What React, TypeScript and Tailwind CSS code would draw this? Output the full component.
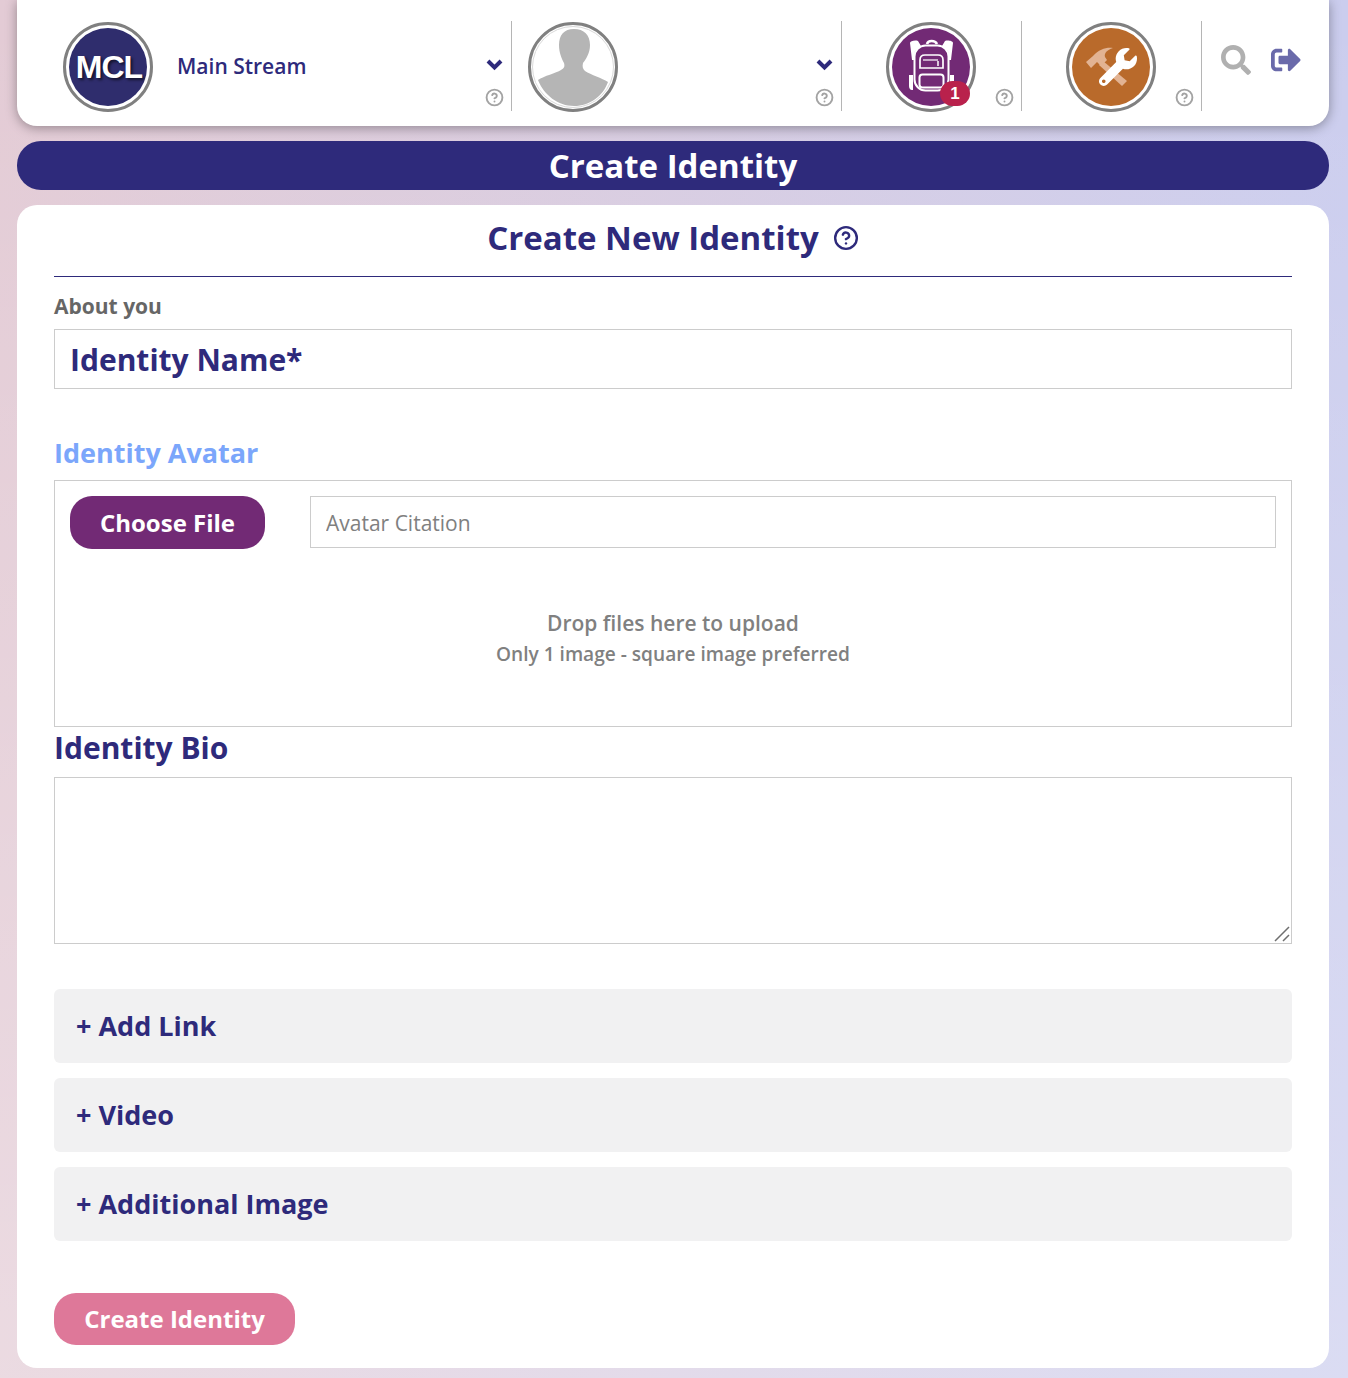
import { ReactNode } from "react";
import { CircleHelp } from "lucide-react";
import { FaSearch, FaSignOutAlt, FaWrench } from "react-icons/fa";

const HelpDot = ({ className = "" }: { className?: string }) => (
  <CircleHelp className={`h-[19px] w-[19px] text-[#a3a3a3] ${className}`} strokeWidth={2.4} />
);

function Chevron() {
  return (
    <svg viewBox="0 0 17 13" className="absolute right-[8px] top-[37px] h-[13px] w-[17px] text-[#2e2a7b]" fill="none" stroke="currentColor" strokeWidth="4">
      <path d="M2 3l6.5 6.5L15 3" />
    </svg>
  );
}

function Avatar({ fill, children }: { fill: string; children: ReactNode }) {
  return (
    <div className="relative mt-[2px] flex h-[90px] w-[90px] shrink-0 items-center justify-center rounded-full border-[3px] border-[#808080] bg-white">
      <div className={`relative flex h-[78px] w-[78px] items-center justify-center rounded-full ${fill}`}>
        {children}
      </div>
    </div>
  );
}

function NavCell({ width, pad, chevron, children }: { width: string; pad: string; chevron?: boolean; children: ReactNode }) {
  return (
    <div className={`relative flex h-[90px] items-center border-r border-[#b5b5b5] ${width} ${pad}`}>
      {children}
      {chevron && <Chevron />}
      <HelpDot className="absolute right-[7px] top-[67px]" />
    </div>
  );
}

function Backpack() {
  return (
    <svg viewBox="0 0 78 78" className="h-[78px] w-[78px]" fill="none" stroke="#fff" strokeWidth="2">
      <path d="M18 15c0-2 5-3 8-2l3 5-6 5-1 9-2 0z M61 15c0-2-5-3-8-2l-3 5 6 5 1 9 2 0z" fill="#fff" stroke="none" />
      <path d="M35 16c1-4 8-4 10 0" strokeWidth="2.6" />
      <rect x="22.5" y="17.5" width="34" height="45" rx="11" />
      <path d="M28 40v-8c0-3 2-5 5-5h13c3 0 5 2 5 5v8z" strokeWidth="1.7" />
      <path d="M31 32h15" strokeWidth="1.2" />
      <path d="M46 33v5" strokeWidth="1.5" />
      <rect x="27.5" y="46.5" width="24" height="13" rx="3" />
      <path d="M17 47h4v15h-1c-2 0-3-2-3-4z M62 47h-4v15h1c2 0 3-2 3-4z" fill="#fff" stroke="none" />
    </svg>
  );
}

function HammerWrench() {
  return (
    <>
      <svg viewBox="0 0 78 78" className="absolute inset-0 h-[78px] w-[78px]" fill="#e2b393">
        <path d="M14 34l7-6c6-7 14-9 20-8-6 2-9 5-8 9l2 3-6 6-4-4-6 6z" />
        <path d="M31 33l24 20-5 5-23-21z" />
      </svg>
      <FaWrench className="absolute left-[27px] top-[20px] h-[38px] w-[38px] text-white" />
    </>
  );
}

function Person() {
  return (
    <svg viewBox="0 0 84 84" className="h-[84px] w-[84px]">
      <circle cx="42" cy="42" r="40.5" fill="#fff" stroke="#cfcfcf" strokeWidth="0.8" />
      <path
        d="M43 4C33 4 28 10 28 20c0 8 3 14 5 18 1 4 0 5-3 7-5 3-17 6-23 10 6 15 20 26 36 26s29-10 34-24c-6-4-17-7-23-11-2-2-3-4-2-8 3-4 7-10 7-18C59 10 53 4 43 4z"
        fill="#b5b5b5"
      />
    </svg>
  );
}

function AddRow({ label }: { label: string }) {
  return (
    <div className="flex h-[74px] items-center rounded-md bg-[#f1f1f2] px-[22px] text-[27px] font-bold text-[#2e2a7b]">
      <span className="mr-[7px]">+</span>
      <span>{label}</span>
    </div>
  );
}

export default function App() {
  return (
    <div className="h-[1378px] overflow-hidden bg-[linear-gradient(to_bottom,rgba(255,255,255,0),rgba(255,255,255,0.3)),linear-gradient(to_right,#e3cbd5,#cbcdee)] pl-[17px] pr-[19px] font-['Open_Sans',sans-serif]">
      {/* Top nav */}
      <div className="flex h-[126px] items-start rounded-b-[20px] bg-white pt-[21px] pl-[46px] shadow-[0_2px_12px_rgba(0,0,0,0.35)]">
        <NavCell width="w-[449px]" pad="pl-0" chevron>
          <Avatar fill="bg-[#2f2d6d]">
            <span className="pl-[2px] font-['Liberation_Sans',sans-serif] text-[32px] font-bold tracking-[-1px] text-white [text-shadow:2px_2px_3px_rgba(0,0,0,0.6)]">
              MCL
            </span>
          </Avatar>
          <span className="ml-[24px] mt-[2px] text-[21px] font-semibold text-[#2e2a7b]">Main Stream</span>
        </NavCell>
        <NavCell width="w-[330px]" pad="pl-[16px]" chevron>
          <Avatar fill="bg-white">
            <div className="absolute -inset-[3px]">
              <Person />
            </div>
          </Avatar>
        </NavCell>
        <NavCell width="w-[180px]" pad="pl-[44px]">
          <Avatar fill="bg-[#722a75]">
            <Backpack />
            <span className="absolute bottom-0 right-0 flex h-[25px] w-[30px] items-center justify-center rounded-full bg-[#b9214c] font-['Liberation_Sans',sans-serif] text-[17px] font-bold text-white">
              1
            </span>
          </Avatar>
        </NavCell>
        <NavCell width="w-[180px]" pad="pl-[44px]">
          <Avatar fill="bg-[#b96a2b]">
            <HammerWrench />
          </Avatar>
        </NavCell>
        <div className="flex items-start gap-[20px] pl-[19px] pt-[24px]">
          <FaSearch className="h-[30px] w-[30px] text-[#b0b0b0]" />
          <FaSignOutAlt className="h-[30px] w-[30px] text-[#6a6aaa]" />
        </div>
      </div>

      {/* Title bar */}
      <div className="mt-[15px] flex h-[49px] items-center justify-center rounded-[24px] bg-[#2e2a7b] text-[33px] font-bold text-white">
        Create Identity
      </div>

      {/* Form card */}
      <div className="mt-[15px] h-[1163px] rounded-[20px] bg-white px-[37px]">
        <div className="flex h-[72px] items-center justify-center gap-[14px] border-b border-[#2e2a7b] pb-[6px] text-[33px] font-bold text-[#2e2a7b]">
          <h1>Create New Identity</h1>
          <CircleHelp className="h-[26px] w-[26px]" strokeWidth={2.2} />
        </div>

        <p className="mt-[15px] h-[37px] text-[21px] leading-[28px] font-bold text-[#666]">About you</p>
        <input
          placeholder="Identity Name*"
          className="block h-[60px] w-full border border-[#ccc] px-[15px] text-[30px] font-bold outline-none placeholder:text-[#2e2a7b] placeholder:opacity-100"
        />

        <h2 className="mt-[45px] h-[46px] text-[27px] leading-[38px] font-bold text-[#7ba6fb]">Identity Avatar</h2>
        <div className="h-[247px] border border-[#ccc] p-[15px]">
          <div className="flex items-start">
            <button className="h-[53px] w-[195px] rounded-[22px] bg-[#722a75] text-[24px] font-bold text-white">
              Choose File
            </button>
            <input
              placeholder="Avatar Citation"
              className="ml-[45px] block h-[52px] flex-1 border border-[#ccc] px-[15px] pt-[2px] text-[21px] outline-none placeholder:text-[#808080] placeholder:opacity-100"
            />
          </div>
          <p className="mt-[59px] text-center text-[21px] leading-[30px] font-semibold text-[#808080]">Drop files here to upload</p>
          <p className="mt-[1px] text-center text-[19.1px] leading-[30px] font-semibold text-[#808080]">
            Only 1 image - square image preferred
          </p>
        </div>

        <h2 className="h-[50px] text-[30px] leading-[42px] font-bold text-[#2e2a7b]">Identity Bio</h2>
        <div className="relative">
          <textarea className="block h-[167px] w-full resize-none border border-[#ccc] outline-none" />
          <svg viewBox="0 0 16 16" className="absolute bottom-[2px] right-[2px] h-[16px] w-[16px]" stroke="#6f6f6f" strokeWidth="1.5">
            <path d="M1 15L15 1M9 15l6-6" />
          </svg>
        </div>

        <div className="mt-[45px] flex flex-col gap-[15px]">
          <AddRow label="Add Link" />
          <AddRow label="Video" />
          <AddRow label="Additional Image" />
        </div>

        <button className="mt-[52px] h-[52px] w-[241px] rounded-[22px] bg-[#de7899] text-[24px] font-bold text-white">
          Create Identity
        </button>
      </div>
    </div>
  );
}
